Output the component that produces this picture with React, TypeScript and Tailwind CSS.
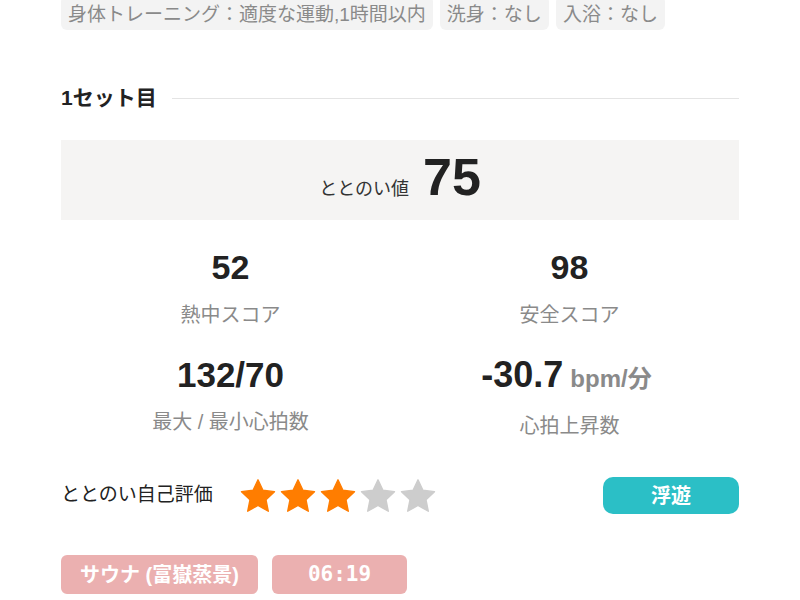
import React from "react";

const Star = ({ on }: { on: boolean }) => (
  <svg width="40" height="40" viewBox="0.25 0 23.5 23.5">
    <path
      d="M12 2.2l2.9 6.2 6.8.8-5 4.7 1.35 6.8L12 17.3l-6.05 3.4 1.35-6.8-5-4.7 6.8-.8z"
      fill={on ? "#ff7d00" : "#cdcdcd"}
      stroke={on ? "#ff7d00" : "#cdcdcd"}
      strokeWidth="0.8"
      strokeLinejoin="round"
    />
  </svg>
);

export default function App() {
  const font = {
    fontFamily: '"Liberation Sans", "Noto Sans CJK JP", sans-serif',
  };
  return (
    <div
      className="w-[800px] h-[600px] overflow-hidden bg-white px-[61px] text-[#222]"
      style={font}
    >
      {/* top tags */}
      <div className="flex gap-[7px] mt-[-4px]">
        <div className="h-[34px] pt-[4px] flex items-center px-[7px] rounded-md bg-[#f3f3f3] text-[19px] text-[#8a8a8a]">
          身体トレーニング：適度な運動,1時間以内
        </div>
        <div className="h-[34px] pt-[4px] flex items-center px-[7px] rounded-md bg-[#f3f3f3] text-[19px] text-[#8a8a8a]">
          洗身：なし
        </div>
        <div className="h-[34px] pt-[4px] flex items-center px-[7px] rounded-md bg-[#f3f3f3] text-[19px] text-[#8a8a8a]">
          入浴：なし
        </div>
      </div>

      {/* heading */}
      <div className="flex items-center gap-[15px] mt-[54px] h-[28px]">
        <div className="text-[21px] font-bold leading-[28px] text-[#222]">1セット目</div>
        <div className="flex-1 h-px bg-[#e4e4e4]" />
      </div>

      {/* totonoi value */}
      <div className="mt-[28px] h-[80px] bg-[#f5f4f3] flex items-center justify-center">
        <div className="flex items-baseline gap-[14px] mt-[-6px]">
          <span className="text-[18px] text-[#333]">ととのい値</span>
          <span className="text-[52px] font-bold leading-none text-[#222]">75</span>
        </div>
      </div>

      {/* stats */}
      <div className="grid grid-cols-2 mt-[27px]">
        <div className="flex flex-col items-center">
          <div className="text-[34px] font-bold leading-[40px]">52</div>
          <div className="text-[20px] leading-[28px] text-[#8a8a8a] mt-[14px]">熱中スコア</div>
        </div>
        <div className="flex flex-col items-center">
          <div className="text-[34px] font-bold leading-[40px]">98</div>
          <div className="text-[20px] leading-[28px] text-[#8a8a8a] mt-[14px]">安全スコア</div>
        </div>
        <div className="flex flex-col items-center mt-[26px]">
          <div className="text-[35px] font-bold leading-[40px]">132/70</div>
          <div className="text-[20px] leading-[28px] text-[#8a8a8a] mt-[13px]">最大 / 最小心拍数</div>
        </div>
        <div className="flex flex-col items-center mt-[26px]">
          <div className="leading-[40px] flex items-baseline gap-[7px] ml-[-6px]">
            <span className="text-[36px] font-bold">-30.7</span>
            <span className="text-[24px] font-bold text-[#8a8a8a]">bpm/分</span>
          </div>
          <div className="text-[20px] leading-[28px] text-[#8a8a8a] mt-[13px]">心拍上昇数</div>
        </div>
      </div>

      {/* rating */}
      <div className="flex items-center mt-[37px] h-[37px]">
        <div className="text-[19px] text-[#222]">ととのい自己評価</div>
        <div className="flex ml-[25px]">
          <Star on />
          <Star on />
          <Star on />
          <Star on={false} />
          <Star on={false} />
        </div>
        <div className="ml-auto w-[136px] h-[37px] rounded-[10px] bg-[#2bbfc6] text-white text-[20px] font-bold flex items-center justify-center">
          浮遊
        </div>
      </div>

      {/* bottom tags */}
      <div className="flex gap-[14px] mt-[41px]">
        <div className="h-[39px] w-[197px] rounded-md bg-[#ebb0b0] text-white text-[20px] font-bold flex items-center justify-center">
          サウナ (富嶽蒸景)
        </div>
        <div
          className="h-[39px] w-[135px] rounded-md bg-[#ebb0b0] text-white text-[21px] font-bold flex items-center justify-center"
          style={{ fontFamily: '"DejaVu Sans Mono", monospace' }}
        >
          06:19
        </div>
      </div>
    </div>
  );
}
